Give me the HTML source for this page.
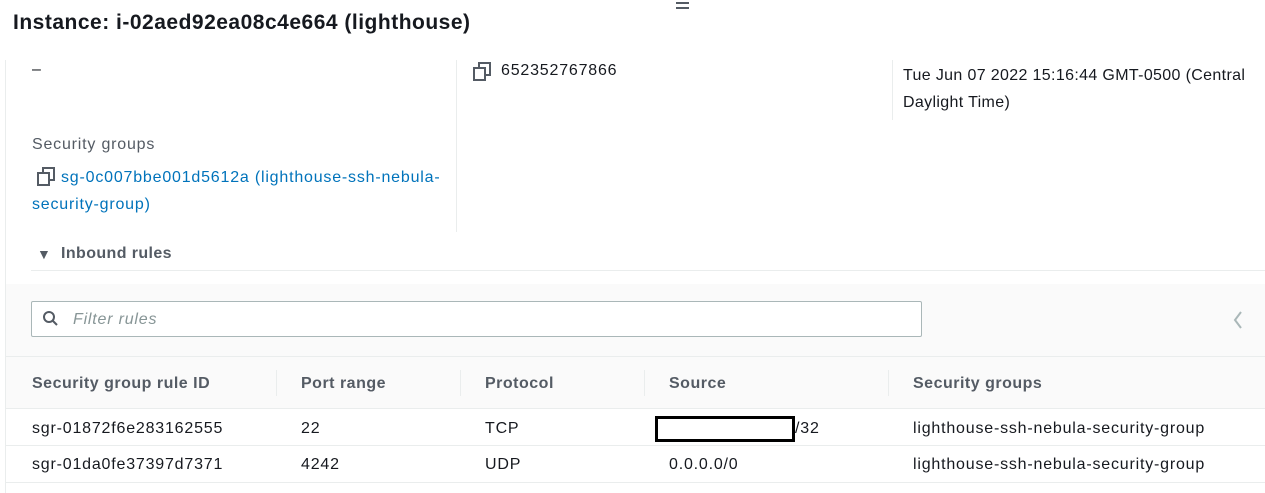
<!DOCTYPE html>
<html><head><style>
body{margin:0;width:1265px;height:493px;overflow:hidden;background:#fff;font-family:"Liberation Sans",sans-serif;color:#16191f;font-size:16px;letter-spacing:0.8px;position:relative}
.a{position:absolute;white-space:nowrap}
.lnk{color:#0073bb}
.copy{position:absolute;width:9px;height:10px;border:2px solid #545b64;background:#fff}
.vl{position:absolute;width:1px;background:#eaeded}
.hl{position:absolute;height:1px;background:#eaeded}
.th{font-weight:bold;color:#545b64;letter-spacing:0.5px}
</style></head><body>
<div class="a" style="left:13px;top:11px;font-size:21px;font-weight:bold;letter-spacing:0.5px">Instance: i-02aed92ea08c4e664 (lighthouse)</div>
<div class="a" style="left:676px;top:2px;width:13px;height:2px;background:#545b64"></div>
<div class="a" style="left:676px;top:7px;width:13px;height:2px;background:#545b64"></div>
<div class="vl" style="left:5px;top:60px;height:433px"></div>
<div class="vl" style="left:456px;top:60px;height:172px"></div>
<div class="vl" style="left:892px;top:60px;height:60px"></div>
<div class="a" style="left:32px;top:61px">–</div>
<div class="copy" style="left:478px;top:62px"></div><div class="copy" style="left:473px;top:67px"></div>
<div class="a" style="left:501px;top:62px">652352767866</div>
<div class="a" style="left:903px;top:62px;line-height:27px;letter-spacing:0.35px">Tue Jun 07 2022 15:16:44 GMT-0500 (Central<br>Daylight Time)</div>
<div class="a" style="left:32px;top:136px;color:#545b64">Security groups</div>
<div class="copy" style="left:42px;top:167px"></div><div class="copy" style="left:37px;top:172px"></div>
<div class="a lnk" style="left:61px;top:169px">sg-0c007bbe001d5612a (lighthouse-ssh-nebula-</div>
<div class="a lnk" style="left:32px;top:196px">security-group)</div>
<div class="a" style="left:37px;top:246px;font-size:14px;color:#545b64">▼</div>
<div class="a" style="left:61px;top:245px;font-weight:bold;color:#545b64;letter-spacing:0.4px">Inbound rules</div>
<div class="hl" style="left:31px;top:270px;width:1234px"></div>
<div class="a" style="left:6px;top:284px;width:1259px;height:124px;background:#fafafa"></div>
<div class="a" style="left:31px;top:301px;width:889px;height:34px;border:1px solid #aab7b8;border-radius:2px;background:#fff"></div>
<svg class="a" style="left:42px;top:310px" width="18" height="18" viewBox="0 0 18 18"><circle cx="7" cy="7" r="5" fill="none" stroke="#545b64" stroke-width="2"/><path d="M11 11l4 4" stroke="#545b64" stroke-width="2"/></svg>
<div class="a" style="left:73px;top:311px;font-style:italic;color:#879596">Filter rules</div>
<svg class="a" style="left:1232px;top:310px" width="12" height="20"><path d="M9 2L3 10l6 8" fill="none" stroke="#aab7b8" stroke-width="2"/></svg>
<div class="hl" style="left:6px;top:356px;width:1259px"></div>
<div class="vl" style="left:276px;top:370px;height:26px"></div>
<div class="vl" style="left:460px;top:370px;height:26px"></div>
<div class="vl" style="left:644px;top:370px;height:26px"></div>
<div class="vl" style="left:888px;top:370px;height:26px"></div>
<div class="a th" style="left:32px;top:375px">Security group rule ID</div>
<div class="a th" style="left:301px;top:375px">Port range</div>
<div class="a th" style="left:485px;top:375px">Protocol</div>
<div class="a th" style="left:669px;top:375px">Source</div>
<div class="a th" style="left:913px;top:375px">Security groups</div>
<div class="hl" style="left:6px;top:408px;width:1259px"></div>
<div class="a" style="left:32px;top:420px">sgr-01872f6e283162555</div>
<div class="a" style="left:301px;top:420px">22</div>
<div class="a" style="left:485px;top:420px">TCP</div>
<div class="a" style="left:655px;top:416px;width:134px;height:20px;border:3px solid #000;background:#fff"></div>
<div class="a" style="left:795px;top:420px">/32</div>
<div class="a" style="left:913px;top:420px">lighthouse-ssh-nebula-security-group</div>
<div class="hl" style="left:6px;top:445px;width:1259px"></div>
<div class="a" style="left:32px;top:456px">sgr-01da0fe37397d7371</div>
<div class="a" style="left:301px;top:456px">4242</div>
<div class="a" style="left:485px;top:456px">UDP</div>
<div class="a" style="left:669px;top:456px">0.0.0.0/0</div>
<div class="a" style="left:913px;top:456px">lighthouse-ssh-nebula-security-group</div>
<div class="hl" style="left:6px;top:482px;width:1259px"></div>
</body></html>
